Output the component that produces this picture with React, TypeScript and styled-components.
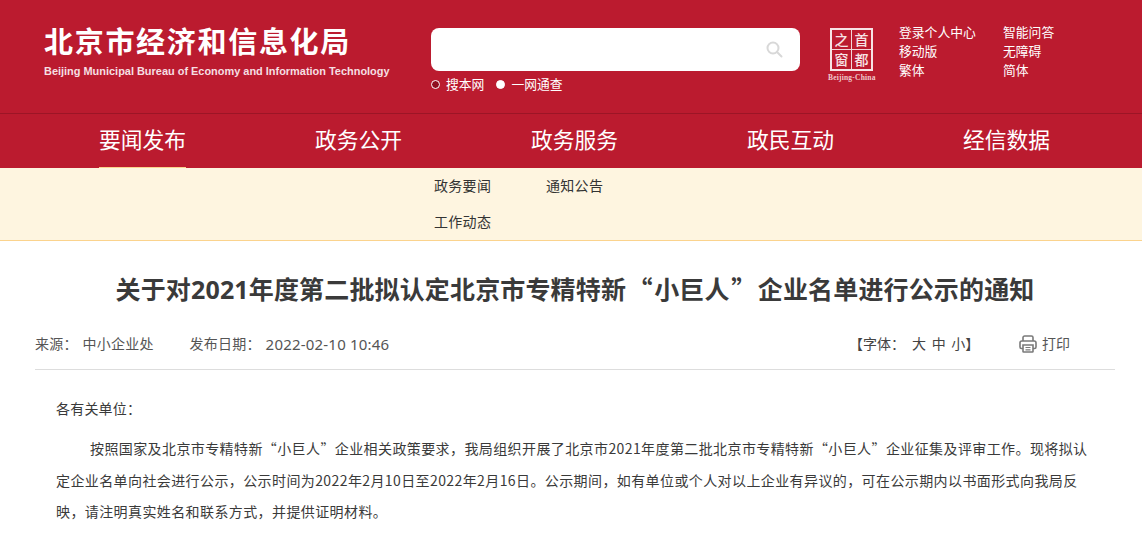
import styled, { createGlobalStyle } from 'styled-components';

const CJK = `"Noto Sans CJK SC", sans-serif`;
const TEXT = `"Noto Sans", "Noto Sans CJK SC", sans-serif`;

const navItems = ['要闻发布', '政务公开', '政务服务', '政民互动', '经信数据'];
const subItems = ['政务要闻', '通知公告', '工作动态'];
const topLinks = ['登录个人中心', '智能问答', '移动版', '无障碍', '繁体', '简体'];

export default function App() {
  return (
    <>
      <GlobalStyle />
      <Header>
        <Brand>
          <BrandName>北京市经济和信息化局</BrandName>
          <BrandEnglish>Beijing Municipal Bureau of Economy and Information Technology</BrandEnglish>
        </Brand>
        <SearchArea>
          <SearchBox>
            <svg width="17" height="17" viewBox="0 0 17 17" fill="none" stroke="#d8d8d8" strokeWidth="2">
              <circle cx="7" cy="7" r="5.5" />
              <path d="M11 11l4.5 4.5" strokeLinecap="round" />
            </svg>
          </SearchBox>
          <RadioRow>
            <RadioLabel><RadioDot />搜本网</RadioLabel>
            <RadioLabel><RadioDot $checked />一网通查</RadioLabel>
          </RadioRow>
        </SearchArea>
        <Stamp>
          <StampGrid>
            <StampChar>之</StampChar>
            <StampChar>首</StampChar>
            <StampChar>窗</StampChar>
            <StampChar>都</StampChar>
          </StampGrid>
          <StampCaption>Beijing-China</StampCaption>
        </Stamp>
        <TopLinks>
          {topLinks.map((t) => (
            <TopLink key={t}>{t}</TopLink>
          ))}
        </TopLinks>
      </Header>

      <Nav>
        {navItems.map((t, i) => (
          <NavItem key={t} $active={i === 0}>
            <span>{t}</span>
          </NavItem>
        ))}
      </Nav>

      <SubNav>
        <SubList>
          {subItems.map((t) => (
            <SubItem key={t}>{t}</SubItem>
          ))}
        </SubList>
      </SubNav>

      <Article>
        <Title>
          关于对2021年度第二批拟认定北京市专精特新<TitleQuote>“</TitleQuote>小巨人<TitleQuote>”</TitleQuote>企业名单进行公示的通知
        </Title>
        <Meta>
          <MetaLeft>
            <MetaField>来源：<span>中小企业处</span></MetaField>
            <MetaField>发布日期：<MetaDate>2022-02-10 10:46</MetaDate></MetaField>
          </MetaLeft>
          <FontSize>【字体：<FontChoices>大 中 小</FontChoices>】</FontSize>
          <PrintLink>
            <svg width="20" height="20" viewBox="0 0 20 20" fill="none" stroke="#7a7a7a" strokeWidth="1.6">
              <path d="M5 7V3.6C5 2.7 5.7 2 6.6 2h6.8c.9 0 1.6.7 1.6 1.6V7" />
              <path d="M5 14.5H3.4C2.6 14.5 2 13.9 2 13.1V8.8C2 7.8 2.8 7 3.8 7h12.4c1 0 1.8.8 1.8 1.8v4.3c0 .8-.6 1.4-1.4 1.4H15" />
              <path d="M5 11h10v6.4c0 .4-.3.6-.6.6H5.6c-.3 0-.6-.2-.6-.6z" />
              <path d="M7.5 13.5h5M7.5 15.8h5" strokeWidth="1.2" />
            </svg>
            打印
          </PrintLink>
        </Meta>
        <Body>
          <Salute>各有关单位：</Salute>
          <Para>按照国家及北京市专精特新“小巨人”企业相关政策要求，我局组织开展了北京市2021年度第二批北京市专精特新“小巨人”企业征集及评审工作。现将拟认定企业名单向社会进行公示，公示时间为2022年2月10日至2022年2月16日。公示期间，如有单位或个人对以上企业有异议的，可在公示期内以书面形式向我局反映，请注明真实姓名和联系方式，并提供证明材料。</Para>
        </Body>
      </Article>
    </>
  );
}

const GlobalStyle = createGlobalStyle`
  html, body {
    margin: 0;
    padding: 0;
    background: #fff;
    overflow: hidden;
    font-family: ${TEXT};
  }
  * { box-sizing: border-box; }
`;

const Header = styled.header`
  height: 114px;
  background: #bb1b2f;
  border-bottom: 1px solid #9c1526;
  display: flex;
  padding-left: 44px;
`;

const Brand = styled.div`
  width: 387px;
  padding-top: 21px;
  color: #fff;
`;

const BrandName = styled.div`
  font-family: ${CJK};
  font-size: 29px;
  line-height: 38px;
  font-weight: 700;
  letter-spacing: 1.7px;
`;

const BrandEnglish = styled.div`
  margin-top: 6px;
  font-family: "Liberation Sans", sans-serif;
  font-size: 10.95px;
  line-height: 12px;
  font-weight: 700;
  white-space: nowrap;
  color: #f6dfe2;
`;

const SearchArea = styled.div`
  width: 369px;
  padding-top: 28px;
`;

const SearchBox = styled.div`
  height: 43px;
  background: #fff;
  border-radius: 8px;
  display: flex;
  align-items: center;
  justify-content: flex-end;
  padding-right: 17px;
`;

const RadioRow = styled.div`
  display: flex;
  gap: 12px;
  margin-top: 3px;
`;

const RadioLabel = styled.label`
  display: flex;
  align-items: center;
  gap: 6px;
  color: #fff;
  font-size: 12.8px;
  line-height: 20px;
`;

const RadioDot = styled.i<{ $checked?: boolean }>`
  width: 9px;
  height: 9px;
  border-radius: 50%;
  border: 1px solid #fff;
  background: ${(p) => (p.$checked ? '#fff' : '#8f0f1f')};
`;

const Stamp = styled.div`
  width: 48px;
  margin: 28px 0 0 28px;
`;

const StampGrid = styled.div`
  width: 43px;
  height: 43px;
  margin-left: 2px;
  border: 2px solid #f7e3e5;
  display: grid;
  grid-template-columns: 1fr 1fr;
  grid-template-rows: 1fr 1fr;
  gap: 1px;
  background: #f3d5d9;
`;

const StampChar = styled.span`
  background: #bb1b2f;
  color: #f7e3e5;
  font-family: ${CJK};
  font-size: 14px;
  font-weight: 500;
  line-height: 19px;
  text-align: center;
  overflow: hidden;
`;

const StampCaption = styled.div`
  margin-top: 2px;
  font-family: "Liberation Serif", serif;
  font-size: 7.5px;
  font-weight: 700;
  line-height: 9px;
  letter-spacing: 0.2px;
  white-space: nowrap;
  color: #f0c8cd;
`;

const TopLinks = styled.div`
  margin: 23px 0 0 23px;
  display: grid;
  grid-template-columns: 104px 60px;
  grid-auto-rows: 19px;
`;

const TopLink = styled.a`
  color: #fff;
  font-size: 12.8px;
  line-height: 19px;
  white-space: nowrap;
`;

const Nav = styled.nav`
  height: 54px;
  background: #bb1b2f;
  padding-left: 34.5px;
  display: grid;
  grid-template-columns: repeat(5, 216px);
`;

const NavItem = styled.a<{ $active?: boolean }>`
  display: flex;
  justify-content: center;
  color: #fff;
  font-size: 21.8px;
  line-height: 52px;

  span {
    display: block;
    height: 54px;
    border-bottom: 1px solid ${(p) => (p.$active ? '#fbd38d' : 'transparent')};
  }
`;

const SubNav = styled.div`
  height: 73px;
  background: #fef5e0;
  border-bottom: 1px solid #fbd38d;
  padding-left: 434px;
`;

const SubList = styled.div`
  width: 224px;
  display: flex;
  flex-wrap: wrap;
`;

const SubItem = styled.a`
  width: 112px;
  height: 36px;
  font-size: 14px;
  letter-spacing: 0.3px;
  line-height: 35px;
  color: #333;
`;

const Article = styled.main`
  width: 1080px;
  margin-left: 35px;
`;

const Title = styled.h1`
  margin: 28px 0 0;
  font-size: 25px;
  line-height: 38px;
  font-weight: 700;
  letter-spacing: 0.15px;
  color: #3a3a3a;
  text-align: center;
  white-space: nowrap;
`;

const TitleQuote = styled.span`
  font-family: ${CJK};
  margin: 0 1.5px;
`;

const Meta = styled.div`
  height: 53px;
  margin-top: 9px;
  padding-top: 2px;
  border-bottom: 1px solid #ddd;
  display: flex;
  align-items: center;
  font-size: 14px;
  line-height: 20px;
  color: #555;
`;

const MetaLeft = styled.div`
  display: flex;
  gap: 36px;
  flex: 1;
  letter-spacing: 0.2px;
`;

const MetaField = styled.div`
  display: flex;
  align-items: center;
  gap: 5px;
`;

const MetaDate = styled.span`
  font-size: 15px;
`;

const FontSize = styled.div`
  width: 170px;
  color: #444;
`;

const FontChoices = styled.span`
  margin-left: 7px;
  word-spacing: 2px;
`;

const PrintLink = styled.a`
  width: 97px;
  margin-left: -1px;
  display: flex;
  align-items: center;
  gap: 4px;
`;

const Body = styled.div`
  padding: 23px 21px 0;
  font-family: ${CJK};
  font-size: 14px;
  letter-spacing: 0.4px;
  line-height: 31.5px;
  color: #3a3a3a;
`;

const Salute = styled.p`
  margin: 0 0 8.5px;
  letter-spacing: 0.2px;
`;

const Para = styled.p`
  margin: 0;
  text-indent: 34px;
`;
